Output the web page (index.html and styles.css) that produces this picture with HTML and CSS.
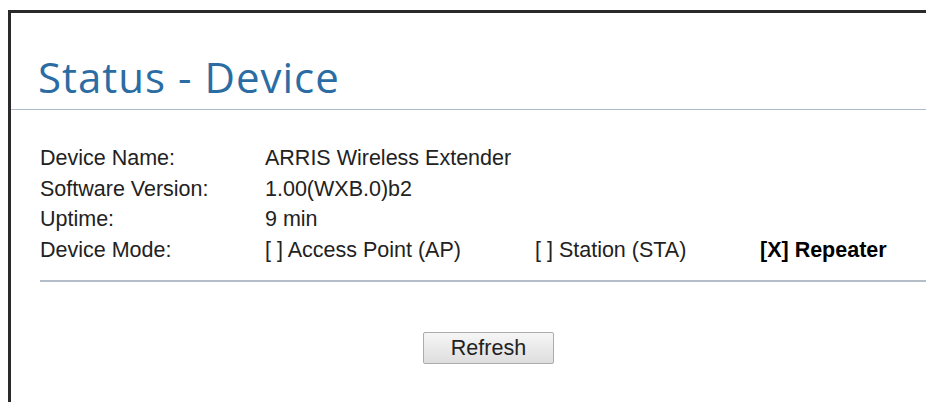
FILE: index.html
```html
<!DOCTYPE html>
<html lang="en">
<head>
<meta charset="utf-8">
<title>Status - Device</title>
<link rel="stylesheet" href="styles.css">
</head>
<body>
<div class="frame">
  <header class="page-head">
    <h1 class="page-title">Status - Device</h1>
  </header>
  <main class="content">
    <div class="info">
      <div class="label">Device Name:</div>
      <div class="value">ARRIS Wireless Extender</div>
      <div class="label">Software Version:</div>
      <div class="value">1.00(WXB.0)b2</div>
      <div class="label">Uptime:</div>
      <div class="value">9 min</div>
      <div class="label">Device Mode:</div>
      <div class="value modes">
        <span class="mode mode-ap">[ ] Access Point (AP)</span>
        <span class="mode mode-sta">[ ] Station (STA)</span>
        <span class="mode mode-on">[X] Repeater</span>
      </div>
    </div>
    <hr class="divider">
    <div class="actions">
      <button class="btn" type="button">Refresh</button>
    </div>
  </main>
</div>
</body>
</html>
```
FILE: styles.css
```css
html {
  overflow: hidden;
  background: #ffffff;
}

body {
  margin: 10px 0 0 8px;
  font-family: "Liberation Sans", Arial, sans-serif;
  color: #222222;
}

.frame {
  width: 960px;
  height: 392px;
  border-top: 3px solid #2a2a2a;
  border-left: 3px solid #2a2a2a;
  box-sizing: border-box;
}

.page-head {
  padding: 39px 0 7px 27px;
  border-bottom: 1px solid #aebccb;
}

.page-title {
  margin: 0;
  font-family: "Open Sans", "Noto Sans", sans-serif;
  font-weight: 400;
  font-size: 42px;
  line-height: 50px;
  letter-spacing: 1px;
  color: #2b6ca3;
}

.content {
  padding: 33px 0 0 29px;
}

.info {
  display: grid;
  grid-template-columns: 225px auto;
  font-size: 21.5px;
  line-height: 30.5px;
}

.modes {
  display: flex;
}

.mode-ap {
  width: 270px;
}

.mode-sta {
  width: 225px;
}

.mode-on {
  font-weight: 700;
  color: #000000;
}

.divider {
  margin: 15px 0 0 0;
  border: 0;
  height: 2px;
  background: #b5bdc8;
}

.actions {
  display: flex;
  justify-content: center;
  width: 897px;
  padding-top: 50px;
}

.btn {
  width: 131px;
  height: 32px;
  padding: 0;
  font-family: "Liberation Sans", Arial, sans-serif;
  font-size: 21.5px;
  color: #222222;
  background: linear-gradient(#f6f6f6, #dedede);
  border: 1px solid #acacac;
  border-radius: 2px;
}
```
